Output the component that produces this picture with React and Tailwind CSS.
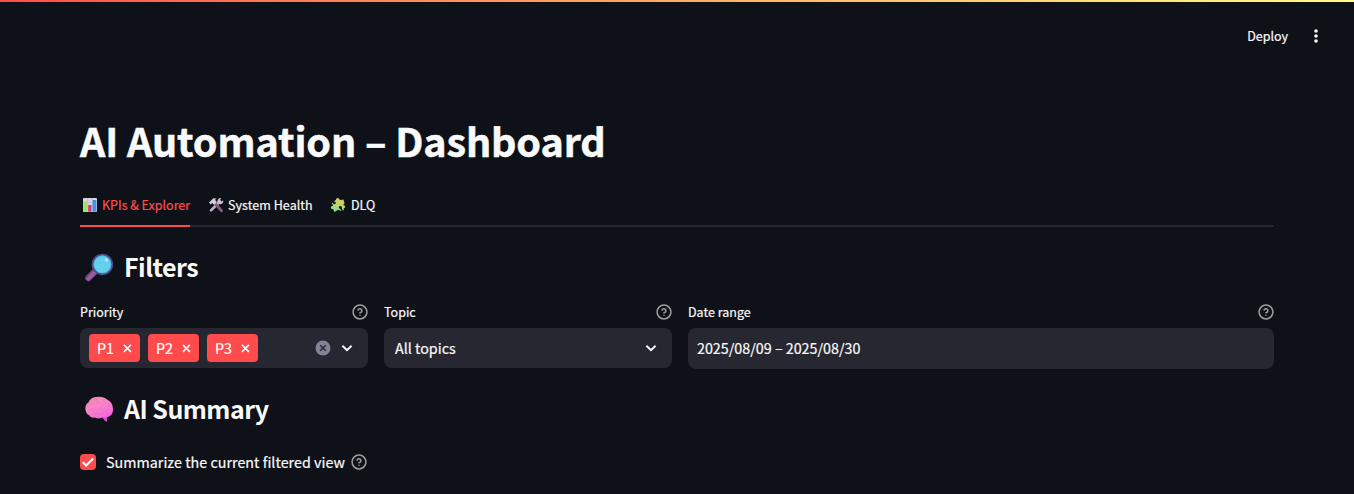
import React from "react";

const Help = () => (
  <svg className="size-4 shrink-0" viewBox="0 0 24 24" fill="none" stroke="#9c9da2" strokeWidth="2.3" strokeLinecap="round" strokeLinejoin="round">
    <circle cx="12" cy="12" r="10.4" />
    <path d="M9.09 9a3 3 0 0 1 5.83 1c0 2-3 3-3 3" />
    <path d="M12 17h.01" />
  </svg>
);

const Chevron = () => (
  <svg className="h-4 w-4 shrink-0" viewBox="0 0 16 16" fill="none" stroke="#fafafa" strokeWidth="2">
    <path d="M3.4 5.8 8 10.2l4.6-4.4" />
  </svg>
);

const ChartIcon = () => (
  <svg className="h-4 w-4 shrink-0" viewBox="0 0 16 16">
    <rect x="1" y="1" width="14" height="14" rx="1" fill="#d9d3e3" />
    <path d="M1 5.5h14M1 10h14M5.7 1v14M10.3 1v14" stroke="#b9b1c8" strokeWidth=".6" />
    <rect x="1.3" y="4.5" width="3.7" height="10.2" fill="#9be06f" />
    <rect x="6.2" y="8" width="3.3" height="6.7" fill="#e0307d" />
    <rect x="10.6" y="3" width="3.8" height="11.7" fill="#3b95e4" />
  </svg>
);

const ToolsIcon = () => (
  <svg className="h-4 w-4 shrink-0" viewBox="0 0 16 16" fill="none">
    <path d="M12 4.5 3 13.4" stroke="#bdb3cb" strokeWidth="2.6" strokeLinecap="round" />
    <path d="M9.8 6.1c-1.2-2.7.7-5.3 3.4-5.1l-1.2 2.2 1.3 1.2 2.1-1c.3 2.8-2.2 4.3-4.5 3.7Z" fill="#c9c0d4" />
    <path d="m7.9 7.5 5.7 6.2" stroke="#8d5a78" strokeWidth="2.9" strokeLinecap="round" />
    <path d="M1 5.6 5.4 1.3l2.7.3-1 1.3L9 5 6.2 7.9 4.2 6 2.7 7.5z" fill="#d5cddd" />
  </svg>
);

const PuzzleIcon = () => (
  <svg className="h-4 w-4 shrink-0" viewBox="0 0 16 16">
    <defs>
      <linearGradient id="puzzle" gradientUnits="userSpaceOnUse" x1="11" y1="1" x2="4" y2="15">
        <stop stopColor="#dfc45f" />
        <stop offset=".45" stopColor="#c3d66c" />
        <stop offset="1" stopColor="#72e09a" />
      </linearGradient>
      <mask id="puzzle-notches">
        <rect width="16" height="16" fill="#fff" />
        <circle cx="4.4" cy="6" r="1.35" fill="#000" />
        <path d="M1 4.6 4.4 6" stroke="#000" strokeWidth="1.3" />
        <circle cx="10.3" cy="10.4" r="1.4" fill="#000" />
        <path d="m10.3 10.4 2.7 4.600" stroke="#000" strokeWidth="1.5" />
      </mask>
    </defs>
    <g fill="url(#puzzle)" mask="url(#puzzle-notches)">
      <path d="m5 3.300 8.300-.8 1.500 3.900-2 1.900 1.200 5-2.800.6-3-1.100L4.600 15l-2.400-4.600 1-2.200-1.800-2.200 3.200-1.500Z" />
      <circle cx="7.700" cy="2.700" r="1.800" />
      <circle cx="13.300" cy="9.700" r="1.800" />
      <circle cx="2.700" cy="10.500" r="1.800" />
    </g>
    <path d="M10 0 10.400 2.900 12.400 2.600 12 0ZM16 5.800l-2.200 1 .1 1.500L16 8Z" fill="#0e1117" />
  </svg>
);

const LensIcon = () => (
  <svg className="mt-[3px] h-[30px] w-[30px] shrink-0" viewBox="0 0 30 30">
    <path d="m4.4 25.1 8-8" stroke="#7d4686" strokeWidth="6.4" strokeLinecap="round" />
    <path d="m4.4 25.7 6-6" stroke="#96609b" strokeWidth="3.4" strokeLinecap="round" />
    <circle cx="18.4" cy="11.4" r="9.8" fill="#63d0ee" stroke="#514b86" strokeWidth="1.9" />
    <circle cx="18.4" cy="11.4" r="8.6" fill="none" stroke="#4fb2dc" strokeWidth=".7" />
    <circle cx="22.4" cy="7" r="1.8" fill="#b4e5fa" />
  </svg>
);

const BrainIcon = () => (
  <svg className="mt-0.5 h-[30px] w-[30px] shrink-0" viewBox="0 0 30 30">
    <defs>
      <linearGradient id="brain" x1="0" y1="0" x2=".6" y2="1">
        <stop stopColor="#ee87ac" />
        <stop offset=".5" stopColor="#fb86c8" />
        <stop offset="1" stopColor="#f566e2" />
      </linearGradient>
    </defs>
    <path d="M18 22h5.4l-.6 5.8c-2.4-1-3.8-2.8-4.8-5.8Z" fill="#e04cc0" />
    <path
      d="M1.4 15.2c-.3-3 .9-5.6 3.2-6.9C5.9 4.8 9.5 2.9 13 3c3.7-.7 7.5.2 10 2.4 3.5 1.5 5.7 4.5 5.8 8.1.8 3.5-.3 7-3 8.6-1.5 1.2-4 1.6-6.3 1.2-3 1.4-6.6 1.5-9 .3-2.3.3-4.6-.5-5.2-2.3-2.1-.6-3.7-3.3-3.9-6.1Z"
      fill="url(#brain)"
    />
    <path
      d="M5 11c2-2.3 4.5-2 6-.5M11 5c2 .3 3 2 2.6 3.7M13 9.5c2.5-1.5 5-.6 6 1M20 5.5c-.8 1.5-.3 2.7 1 3.3M5 16c3-1.6 5.5-1 7-.5s4.5.2 5.5-2M18 15c2 2.2 5 2 7 .3M25 9.5c-1.2.8-1.500 2-1 3.5M8.5 20c2.5.7 4.5-.6 5.500-2.3M15 20.5c2-1.700 4-1 5 0"
      fill="none" stroke="#df70b0" strokeWidth=".6" strokeLinecap="round"
    />
  </svg>
);

const Tag = ({ children }) => (
  <span className="flex h-7 w-[51px] items-center rounded bg-[#ff4b4b] pl-2 text-[14.3px] text-white">
    <span className="w-[26px]">{children}</span>
    <svg className="size-[9px]" viewBox="0 0 9 9" stroke="#fff" strokeWidth="1.5">
      <path d="m.9.9 7 7M7.9.9l-7 7" />
    </svg>
  </span>
);

const Label = ({ children }) => (
  <div className="flex h-4 items-center justify-between text-[12.5px]">
    <span>{children}</span>
    <Help />
  </div>
);

export default function App() {
  return (
    <div className="flex h-[494px] flex-col overflow-hidden bg-[#0e1117] font-['Noto_Sans_CJK_JP',sans-serif] leading-none whitespace-nowrap text-[#fafafa] [-webkit-text-stroke:0.2px]">
      <div className="h-0.5 bg-linear-to-r from-[#ff4b4b] to-[#fffd80]" />
      <header className="flex h-[68px] items-center justify-end pr-[30px] text-[12.5px]">
        <span>Deploy</span>
        <svg className="ml-5 size-4" viewBox="0 0 16 16" fill="#fafafa">
          <circle cx="8" cy="3" r="1.8" />
          <circle cx="8" cy="8" r="1.8" />
          <circle cx="8" cy="13" r="1.8" />
        </svg>
      </header>
      <main className="flex flex-col px-20 pt-[43px]">
        <h1 className="flex h-[53px] items-center text-[39.5px] font-bold tracking-[-0.12px] [-webkit-text-stroke:0.5px]">AI Automation – Dashboard</h1>
        <nav className="mt-[19px] flex h-[42px] gap-4 border-b-2 border-[#262730] text-[12.5px]">
          <div className="-mb-0.5 flex w-[110px] items-center border-b-2 border-[#ff4b4b] pl-0.5 text-[#ff4b4b]">
            <ChartIcon />
            <span className="ml-1">KPIs &amp; Explorer</span>
          </div>
          <div className="flex w-[106px] items-center pl-0.5">
            <ToolsIcon />
            <span className="ml-1 tracking-[0.05px]">System Health</span>
          </div>
          <div className="flex items-center pl-0.5">
            <PuzzleIcon />
            <span className="ml-[5px]">DLQ</span>
          </div>
        </nav>
        <h2 className="mt-6 flex h-[30px] items-center pl-1 text-[25px] font-bold tracking-[-0.52px] [-webkit-text-stroke:0px]">
          <LensIcon />
          <span className="ml-2.5">Filters</span>
        </h2>
        <div className="mt-[23px] grid grid-cols-[288px_288px_586px] gap-x-4">
          <div>
            <Label>Priority</Label>
            <div className="mt-2 flex h-10 items-center gap-2 rounded-lg bg-[#262730] px-[9px]">
              <Tag>P1</Tag>
              <Tag>P2</Tag>
              <Tag>P3</Tag>
              <svg className="ml-auto size-4" viewBox="0 0 16 16">
                <circle cx="8" cy="8" r="7.5" fill="#808495" />
                <path d="m5.2 5.2 5.6 5.6M10.8 5.2l-5.6 5.6" stroke="#262730" strokeWidth="1.5" />
              </svg>
              <div className="mr-1"><Chevron /></div>
            </div>
          </div>
          <div>
            <Label>Topic</Label>
            <div className="mt-2 flex h-10 items-center justify-between rounded-lg bg-[#262730] pr-[13px] pl-[11px] text-[14.3px]">
              <span>All topics</span>
              <Chevron />
            </div>
          </div>
          <div>
            <Label>Date range</Label>
            <div className="mt-2 flex h-[41px] items-center rounded-lg bg-[#262730] pl-[9px] text-[14.3px]">2025/08/09 – 2025/08/30</div>
          </div>
        </div>
        <h2 className="mt-6 flex h-[30px] items-center pl-1 text-[25px] font-bold tracking-[-0.54px] [-webkit-text-stroke:0px]">
          <BrainIcon />
          <span className="ml-2.5">AI Summary</span>
        </h2>
        <div className="mt-[31px] flex h-4 items-center text-[14.3px]">
          <svg className="size-4" viewBox="0 0 16 16" fill="none">
            <rect width="16" height="16" rx="4" fill="#ff4b4b" />
            <path d="m2.8 8.3 3.3 3.2 7-7" stroke="#fff" strokeWidth="2.2" />
          </svg>
          <span className="mr-1.5 ml-2.5 tracking-[0.02px]">Summarize the current filtered view</span>
          <Help />
        </div>
      </main>
    </div>
  );
}
